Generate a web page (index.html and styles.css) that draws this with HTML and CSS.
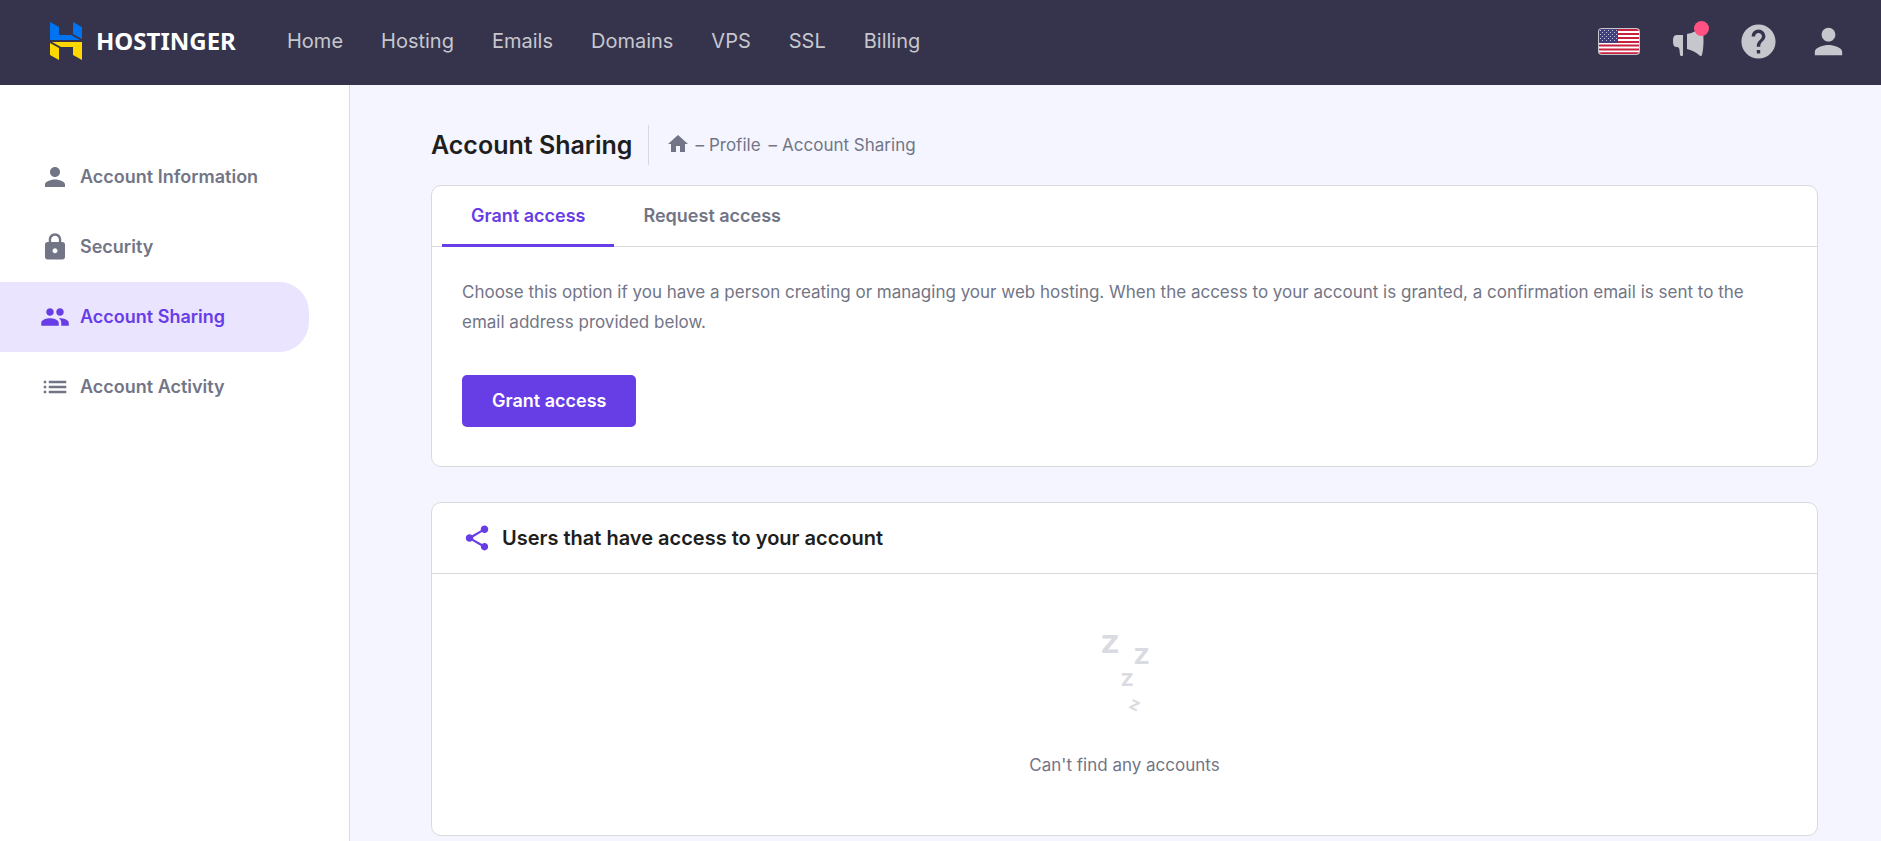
FILE: index.html
```html
<!DOCTYPE html>
<html lang="en">
<head>
<meta charset="utf-8">
<meta name="viewport" content="width=device-width, initial-scale=1">
<title>Account Sharing</title>
<link rel="stylesheet" href="styles.css">
</head>
<body>
<header class="topbar">
  <a class="brand" href="#">
    <svg class="brand-mark" viewBox="0 0 32 38" aria-hidden="true">
      <path fill="#0073f0" d="M0 0l9 5v8h12l9 5H0zM23 0l9 5v12l-9-5z"/>
      <path fill="#ffd800" d="M2 20h30v18l-9-5v-8H11zM0 21l9 5v12l-9-5z"/>
    </svg>
    <span class="brand-name">HOSTINGER</span>
  </a>
  <nav class="topnav" aria-label="Main">
    <a href="#">Home</a>
    <a href="#">Hosting</a>
    <a href="#">Emails</a>
    <a href="#">Domains</a>
    <a href="#">VPS</a>
    <a href="#">SSL</a>
    <a href="#">Billing</a>
  </nav>
  <div class="tools">
    <button class="tool tool-wide" type="button" aria-label="Language">
      <svg class="flag" viewBox="0 0 42 27">
        <defs>
          <clipPath id="flag-clip"><rect x="1" y="1" width="40" height="25" rx="3"/></clipPath>
          <pattern id="stars" width="4" height="4" patternUnits="userSpaceOnUse"><path fill="#c5c5dc" d="M0 0h1v1H0zM2 2h1v1H2z"/></pattern>
        </defs>
        <rect width="42" height="27" rx="4" fill="#c6c7cd"/>
        <g clip-path="url(#flag-clip)">
          <path fill="#fff" d="M1 1h40v25H1z"/>
          <path stroke="#c8203f" stroke-width="2" d="M1 2h40M1 6h40M1 10h40M1 14h40M1 17.500h40M1 21.500h40M1 25.200h40"/>
          <path fill="#40407c" d="M1 1h19v14H1z"/>
          <path fill="url(#stars)" d="M2 2h17v12H2z"/>
        </g>
      </svg>
    </button>
    <button class="tool tool-wide" type="button" aria-label="News">
      <svg class="horn" viewBox="0 0 32 30">
        <path d="M10 9v20c0 1.300-2.500 1.300-3 0l-.5-5c-.2-2-1-3-2.500-3-3 0-4-2-4-6s1-6 4-6zM14 8c6-1 12-4 15-8 2 9 2 20 0 29-.5 1.300-2 1.300-3 0-3-3-8-5-12-6z"/>
      </svg>
      <span class="dot"></span>
    </button>
    <button class="tool" type="button" aria-label="Help">
      <svg class="tool-icon" viewBox="0 0 24 24"><path d="M12 2C6.480 2 2 6.480 2 12s4.480 10 10 10 10-4.480 10-10S17.520 2 12 2zm1 17h-2v-2h2v2zm2.070-7.750l-.9.920C13.450 12.900 13 13.500 13 15h-2v-.5c0-1.100.45-2.100 1.170-2.830l1.240-1.260c.37-.36.590-.86.590-1.410 0-1.100-.9-2-2-2s-2 .9-2 2H8c0-2.210 1.790-4 4-4s4 1.790 4 4c0 .88-.36 1.680-.93 2.250z"/></svg>
    </button>
    <button class="tool" type="button" aria-label="Profile">
      <svg class="tool-icon" viewBox="0 0 24 24"><path d="M12 12c2.210 0 4-1.790 4-4s-1.790-4-4-4-4 1.790-4 4 1.790 4 4 4zm0 2c-2.670 0-8 1.340-8 4v2h16v-2c0-2.660-5.330-4-8-4z"/></svg>
    </button>
  </div>
</header>
<div class="layout">
  <nav class="sidebar" aria-label="Profile">
    <a class="side-link" href="#">
      <svg class="icon" viewBox="0 0 24 24"><path d="M12 12c2.210 0 4-1.790 4-4s-1.790-4-4-4-4 1.790-4 4 1.790 4 4 4zm0 2c-2.670 0-8 1.340-8 4v2h16v-2c0-2.660-5.330-4-8-4z"/></svg>
      <span>Account Information</span>
    </a>
    <a class="side-link" href="#">
      <svg class="icon" viewBox="0 0 24 24"><path d="M18 8h-1V6c0-2.760-2.240-5-5-5S7 3.240 7 6v2H6c-1.100 0-2 .9-2 2v10c0 1.100.9 2 2 2h12c1.100 0 2-.9 2-2V10c0-1.100-.9-2-2-2zm-6 9c-1.100 0-2-.9-2-2s.9-2 2-2 2 .9 2 2-.9 2-2 2zm3.100-9H8.900V6c0-1.710 1.390-3.100 3.100-3.100s3.100 1.390 3.100 3.100v2z"/></svg>
      <span>Security</span>
    </a>
    <a class="side-link active" href="#" aria-current="page">
      <svg class="icon" viewBox="0 0 24 24"><path d="M16 11c1.660 0 2.990-1.340 2.990-3S17.660 5 16 5s-3 1.340-3 3 1.340 3 3 3zm-8 0c1.660 0 2.990-1.340 2.990-3S9.660 5 8 5 5 6.340 5 8s1.340 3 3 3zm0 2c-2.330 0-7 1.170-7 3.500V19h14v-2.500C15 14.170 10.330 13 8 13zm8 0c-.29 0-.62.020-.97.050 1.160.84 1.970 1.970 1.970 3.450V19h6v-2.500c0-2.330-4.670-3.500-7-3.500z"/></svg>
      <span>Account Sharing</span>
    </a>
    <a class="side-link" href="#">
      <svg class="icon" viewBox="0 0 24 24"><path d="M3 11h2v2H3zM3 15h2v2H3zM3 7h2v2H3zM7 11h14v2H7zM7 15h14v2H7zM7 7h14v2H7z"/></svg>
      <span>Account Activity</span>
    </a>
  </nav>
  <main class="main">
    <div class="page-head">
      <h1 class="page-title">Account Sharing</h1>
      <nav class="crumbs" aria-label="Breadcrumb">
        <a href="#" aria-label="Home"><svg class="home" viewBox="0 0 24 24"><path d="M10 20v-6h4v6h5v-8h3L12 3 2 12h3v8z"/></svg></a>
        <span>–</span>
        <a href="#">Profile</a>
        <span class="crumb-last">–</span>
        <span>Account Sharing</span>
      </nav>
    </div>
    <section class="card">
      <div class="tabs" role="tablist">
        <button class="tab selected" type="button" role="tab" aria-selected="true">Grant access</button>
        <button class="tab" type="button" role="tab" aria-selected="false">Request access</button>
      </div>
      <div class="card-body">
        <p class="intro">Choose this option if you have a person creating or managing your web hosting. When the access to your account is granted, a confirmation email is sent to the email address provided below.</p>
        <button class="primary" type="button">Grant access</button>
      </div>
    </section>
    <section class="card">
      <div class="card-head">
        <svg class="icon share" viewBox="0 0 24 24"><path d="M18 16.080c-.76 0-1.440.3-1.960.77L8.910 12.700c.05-.23.090-.46.090-.7s-.04-.47-.09-.7l7.050-4.110c.54.5 1.250.81 2.040.81 1.660 0 3-1.340 3-3s-1.340-3-3-3-3 1.340-3 3c0 .24.040.47.090.7L8.040 9.810C7.500 9.310 6.790 9 6 9c-1.660 0-3 1.340-3 3s1.340 3 3 3c.79 0 1.500-.31 2.040-.81l7.120 4.160c-.05.210-.08.430-.08.650 0 1.610 1.310 2.920 2.920 2.920s2.920-1.310 2.920-2.920-1.310-2.920-2.920-2.920z"/></svg>
        <h2 class="card-title">Users that have access to your account</h2>
      </div>
      <div class="empty">
        <svg class="sleep" viewBox="0 0 48 80" aria-hidden="true">
          <text x="0" y="19" font-size="25">Z</text>
          <text x="33" y="30" font-size="21">Z</text>
          <text x="20" y="52" font-size="17">Z</text>
          <text x="29" y="76" font-size="13" transform="rotate(25 34 71)">Z</text>
        </svg>
        <p class="empty-text">Can't find any accounts</p>
      </div>
    </section>
  </main>
</div>
</body>
</html>
```
FILE: styles.css
```css
* { box-sizing: border-box; }

body {
  margin: 0;
  min-height: 100vh;
  display: flex;
  flex-direction: column;
  background: #f4f5ff;
  color: #727586;
  font-family: Inter, "Liberation Sans", sans-serif;
  font-size: 17px;
  line-height: 30px;
}

a { color: inherit; text-decoration: none; }
button { border: 0; background: none; font: inherit; color: inherit; cursor: pointer; }
h1, h2, p { margin: 0; }
svg { display: block; flex: none; fill: currentColor; }

.topbar {
  display: flex;
  align-items: center;
  height: 85px;
  padding: 0 32px 3px 50px;
  background: #36344d;
  color: #c6c7cd;
}
.brand { display: flex; align-items: center; gap: 14px; width: 237px; color: #fff; }
.brand-mark { width: 32px; height: 38px; }
.brand-name { font-family: "Noto Sans", sans-serif; font-size: 24px; font-weight: 700; }
.topnav { display: flex; gap: 38px; font-size: 20px; }
.tools { display: flex; align-items: center; gap: 29px; margin-left: auto; }
.tool { position: relative; padding: 0; }
.tool-wide { padding-right: 4px; }
.flag { width: 42px; height: 27px; }
.tool-icon { width: 41px; height: 41px; }
.horn { width: 32px; height: 30px; }
.dot {
  position: absolute;
  top: -5px;
  right: 0;
  width: 15px;
  height: 15px;
  border-radius: 50%;
  background: #ff5182;
}

.layout { display: flex; flex: 1; }
.sidebar {
  flex: none;
  width: 350px;
  padding: 57px 40px 0 0;
  background: #fff;
  border-right: 1px solid #d9dade;
}
.side-link {
  display: flex;
  align-items: center;
  gap: 10px;
  height: 70px;
  padding-left: 40px;
  border-radius: 0 30px 30px 0;
  font-size: 18px;
  font-weight: 600;
}
.side-link.active { background: #ebe4ff; color: #673de6; }
.icon { width: 30px; height: 30px; }

.main { flex: 1; padding: 40px 63px 5px 81px; }
.page-head { display: flex; align-items: center; height: 40px; margin-bottom: 20px; }
.page-title { padding-right: 16px; color: #1d1e20; font-size: 25px; font-weight: 600; }
.crumbs {
  display: flex;
  align-items: center;
  gap: 5px;
  height: 40px;
  padding-left: 17px;
  border-left: 1px solid #d9dade;
}
.home { width: 24px; height: 24px; margin-bottom: 3px; }
.crumb-last { margin-left: 3px; }

.card { background: #fff; border: 1px solid #d9dade; border-radius: 10px; }
.card + .card { margin-top: 35px; }
.tabs { display: flex; height: 61px; padding-left: 10px; border-bottom: 1px solid #d9dade; }
.tab {
  height: 61px;
  padding: 2px 29px 0;
  border-bottom: 3px solid transparent;
  font-size: 18px;
  font-weight: 600;
}
.tab.selected { border-color: #673de6; color: #673de6; }
.card-body { padding: 30px 30px 39px; }
.primary {
  display: block;
  height: 52px;
  margin-top: 38px;
  padding: 0 30px;
  border-radius: 5px;
  background: #673de6;
  color: #fff;
  font-size: 18px;
  font-weight: 600;
}
.card-head {
  display: flex;
  align-items: center;
  gap: 10px;
  height: 71px;
  padding: 0 30px;
  border-bottom: 1px solid #d9dade;
}
.share { color: #673de6; }
.card-title { color: #1d1e20; font-size: 20px; font-weight: 600; }
.empty { display: flex; flex-direction: column; align-items: center; padding: 60px 30px 55px; }
.sleep { width: 48px; height: 80px; fill: #dadbe0; font-family: "DejaVu Sans", sans-serif; font-weight: 700; overflow: visible; }
.empty-text { margin-top: 36px; }
```
